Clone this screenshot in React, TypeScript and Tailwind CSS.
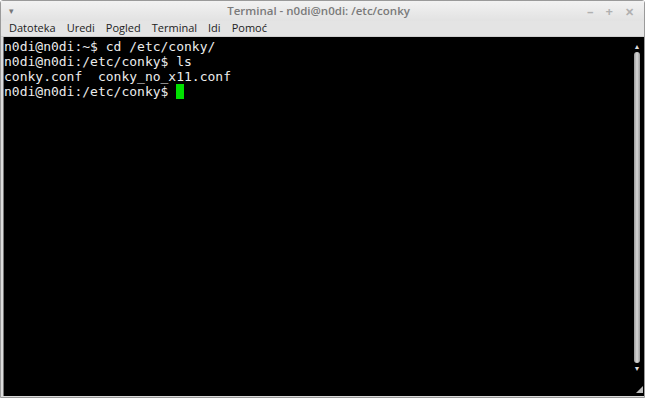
import React from "react";

const lines = [
  "n0di@n0di:~$ cd /etc/conky/",
  "n0di@n0di:/etc/conky$ ls",
  "conky.conf  conky_no_x11.conf",
];

const menus = ["Datoteka", "Uredi", "Pogled", "Terminal", "Idi", "Pomoć"];

const App = () => {
  return (
    <div className="w-[647px] h-[400px] bg-white overflow-hidden">
      <div className="w-[645px] h-[398px] flex flex-col border border-[#9a9a9a] rounded-t-[3px] bg-[#dcdcdc] font-['Open_Sans',sans-serif]">
        {/* title bar */}
        <div className="h-[20px] flex items-center px-2 bg-gradient-to-b from-[#f2f2f2] to-[#e2e2e2]">
          <span className="text-[9px] text-[#777] leading-none mt-[-2px]">▾</span>
          <div className="flex-1 text-center text-[11.5px] font-semibold text-[#7a7a7a] pl-[36px]">
            Terminal - n0di@n0di: /etc/conky
          </div>
          <div className="flex items-center gap-[12px] text-[#b0b0b0] text-[13px] font-bold leading-none pr-[2px]">
            <span>–</span>
            <span>+</span>
            <span className="text-[11px]">✕</span>
          </div>
        </div>
        {/* menu bar */}
        <div className="h-[16px] flex items-center gap-[11px] pl-[8px] bg-[#e4e4e4] text-[11px] text-[#222] border-b border-[#cfcfcf]">
          {menus.map((m) => (
            <span key={m}>{m}</span>
          ))}
        </div>
        {/* terminal */}
        <div className="flex-1 flex bg-black ml-[2px] mb-[1px] border-l border-[#777]">
          <div className="flex-1 pt-[2px] font-['DejaVu_Sans_Mono',monospace] text-[13px] leading-[15px] text-[#ececec] whitespace-pre">
            {lines.map((l) => (
              <div key={l}>{l}</div>
            ))}
            <div className="flex items-center">
              <span>n0di@n0di:/etc/conky$ </span>
              <span className="inline-block w-[8px] h-[15px] bg-[#00e000]" />
            </div>
          </div>
          {/* scrollbar */}
          <div className="w-[12px] flex flex-col items-center pt-[6px] pb-[3px] mr-[1px]">
            <span className="text-[7px] text-[#ddd] leading-none">▲</span>
            <div className="w-[6px] flex-1 mt-[2px] mb-[2px] rounded-[3px] bg-gradient-to-r from-[#999] via-[#d8d8d8] to-[#999]" />
            <span className="text-[7px] text-[#ddd] leading-none">▼</span>
            <span className="mt-[14px] self-end w-0 h-0 border-l-[7px] border-l-transparent border-b-[7px] border-b-[#bbb]" />
          </div>
        </div>
      </div>
    </div>
  );
};

export default App;
